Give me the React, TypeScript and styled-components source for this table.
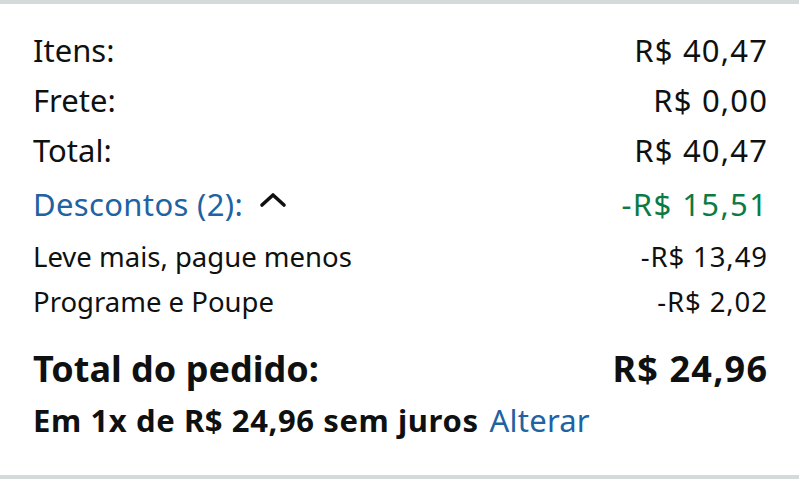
import React from "react";
import styled, { createGlobalStyle } from "styled-components";

const Global = createGlobalStyle`
  html, body { margin: 0; padding: 0; background: #fff; }
  body { font-family: "Noto Sans", "Open Sans", sans-serif; color: #0f1111; }
`;

const Card = styled.div`
  border-top: 4px solid #d5d9d9;
  border-bottom: 4px solid #d5d9d9;
  padding: 21px 32px 33px 33px;
  display: flex;
  flex-direction: column;
`;

type Kind = "main" | "sub" | "total" | "plan";

const sizes: Record<Kind, { fs: number; lh: number; fw: number; ls: number }> = {
  main: { fs: 31, lh: 50, fw: 400, ls: 1.2 },
  sub: { fs: 27.5, lh: 45, fw: 400, ls: 0.9 },
  total: { fs: 36, lh: 50, fw: 700, ls: 1.2 },
  plan: { fs: 31, lh: 44, fw: 700, ls: 0.6 },
};

const Row = styled.div<{ $kind: Kind; $mt?: number }>`
  display: flex;
  justify-content: space-between;
  align-items: baseline;
  font-size: ${(p) => sizes[p.$kind].fs}px;
  line-height: ${(p) => sizes[p.$kind].lh}px;
  font-weight: ${(p) => sizes[p.$kind].fw};
  margin-top: ${(p) => p.$mt ?? 0}px;
  white-space: nowrap;
  --ls: ${(p) => sizes[p.$kind].ls}px;
`;

const Label = styled.span<{ $link?: boolean; $spaced?: boolean }>`
  color: ${(p) => (p.$link ? "#2162a1" : "#0f1111")};
  display: inline-flex;
  align-items: center;
  letter-spacing: ${(p) => (p.$spaced ? "var(--ls)" : p.$link ? "0.35px" : "0")};
`;

const Value = styled.span<{ $green?: boolean; $extra?: number }>`
  color: ${(p) => (p.$green ? "#0b7a45" : "#0f1111")};
  letter-spacing: calc(var(--ls) + ${(p) => p.$extra ?? 0}px);
  margin-right: calc(-1 * (var(--ls) + ${(p) => p.$extra ?? 0}px));
`;

const Link = styled.span`
  color: #2162a1;
  font-weight: 400;
  letter-spacing: 0.2px;
  margin-left: 11px;
`;

const Chevron = styled.svg`
  width: 28px;
  height: 16px;
  margin-left: 16px;
  margin-top: -8px;
`;

export default function App() {
  return (
    <>
      <Global />
      <Card>
        <Row $kind="main">
          <Label>Itens:</Label>
          <Value>R$ 40,47</Value>
        </Row>
        <Row $kind="main">
          <Label>Frete:</Label>
          <Value>R$ 0,00</Value>
        </Row>
        <Row $kind="main">
          <Label>Total:</Label>
          <Value>R$ 40,47</Value>
        </Row>
        <Row $kind="main" $mt={4}>
          <Label $link>
            Descontos (2):
            <Chevron viewBox="0 0 28 16">
              <polyline
                points="3,13 14,3 25,13"
                fill="none"
                stroke="#0f1111"
                strokeWidth="3.6"
                strokeLinecap="round"
                strokeLinejoin="round"
              />
            </Chevron>
          </Label>
          <Value $green $extra={0.2}>-R$ 15,51</Value>
        </Row>
        <Row $kind="sub" $mt={5}>
          <Label>Leve mais, pague menos</Label>
          <Value>-R$ 13,49</Value>
        </Row>
        <Row $kind="sub">
          <Label>Programe e Poupe</Label>
          <Value>-R$ 2,02</Value>
        </Row>
        <Row $kind="total" $mt={20}>
          <Label>Total do pedido:</Label>
          <Value>R$ 24,96</Value>
        </Row>
        <Row $kind="plan" $mt={4}>
          <Label $spaced>
            Em 1x de R$ 24,96 sem juros
            <Link>Alterar</Link>
          </Label>
        </Row>
      </Card>
    </>
  );
}
